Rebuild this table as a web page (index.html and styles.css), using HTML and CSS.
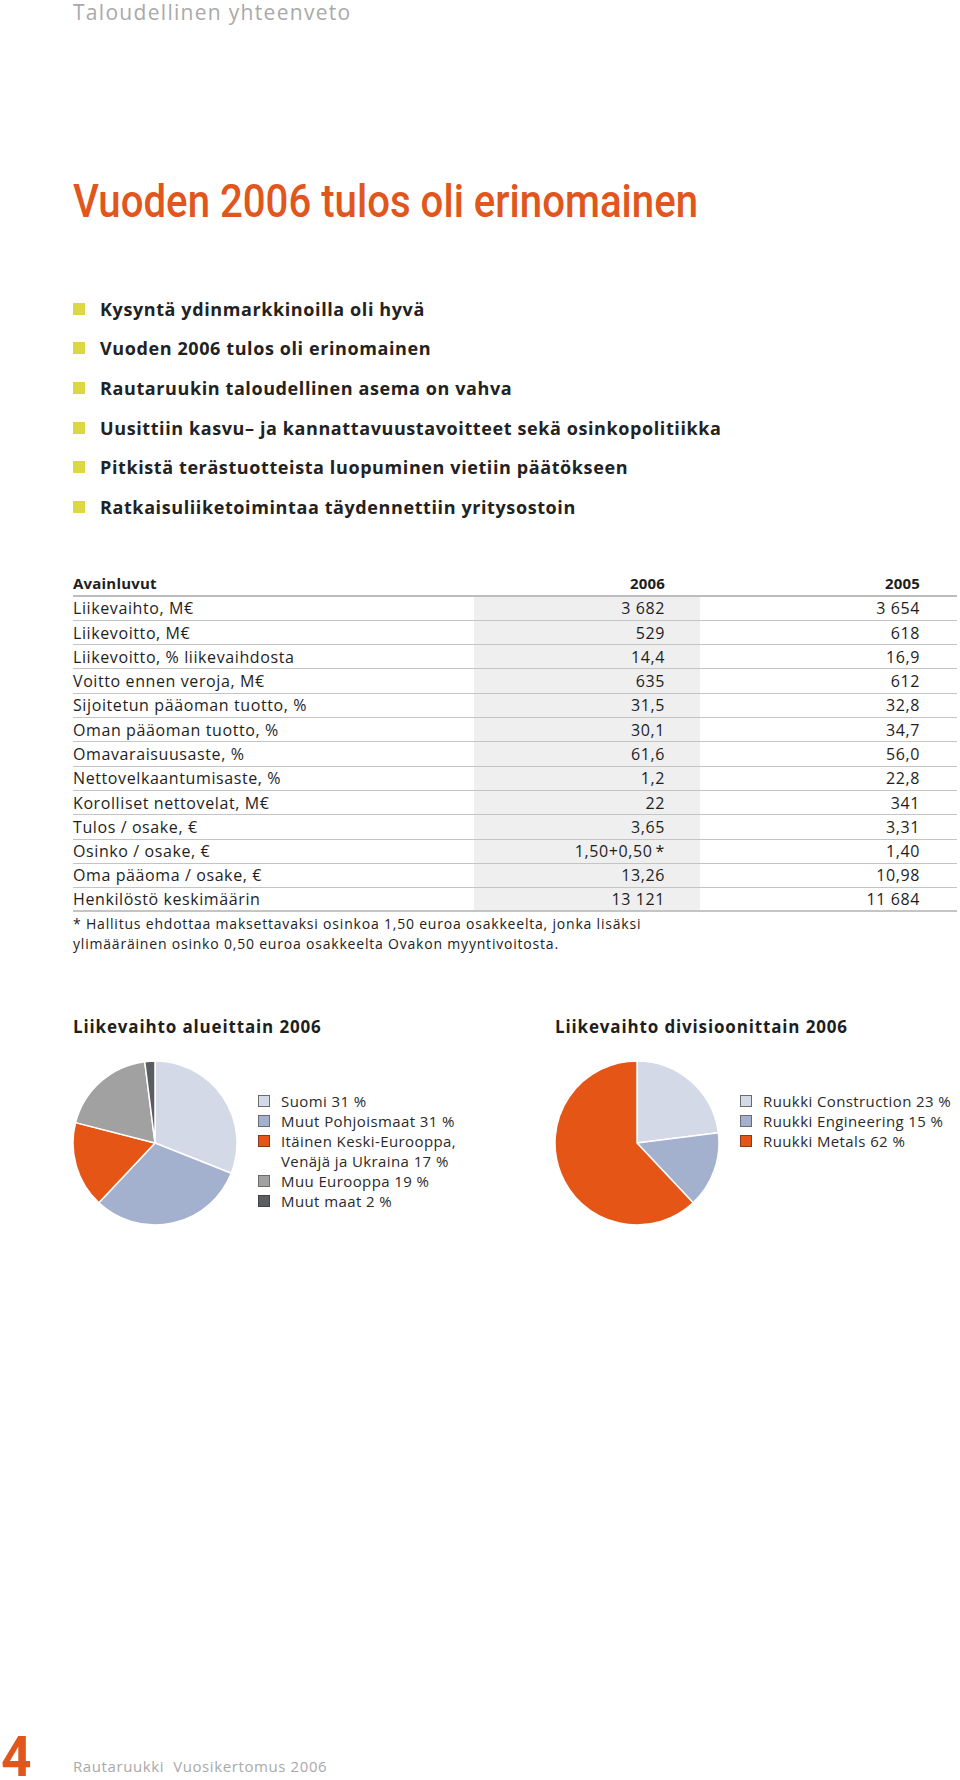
FILE: index.html
```html
<!DOCTYPE html>
<html lang="fi">
<head>
<meta charset="utf-8">
<title>Taloudellinen yhteenveto</title>
<link rel="stylesheet" href="styles.css">
</head>
<body>
<div class="page">
  <header class="running">Taloudellinen yhteenveto</header>

  <h1 class="headline"><span class="headline-text">Vuoden 2006 tulos oli erinomainen</span></h1>

  <ul class="highlights">
    <li>Kysyntä ydinmarkkinoilla oli hyvä</li>
    <li>Vuoden 2006 tulos oli erinomainen</li>
    <li>Rautaruukin taloudellinen asema on vahva</li>
    <li>Uusittiin kasvu– ja kannattavuustavoitteet sekä osinkopolitiikka</li>
    <li>Pitkistä terästuotteista luopuminen vietiin päätökseen</li>
    <li>Ratkaisuliiketoimintaa täydennettiin yritysostoin</li>
  </ul>

  <div class="keyfigs">
    <div class="kf-row kf-head">
      <span class="kf-label">Avainluvut</span>
      <span class="kf-cur">2006</span>
      <span class="kf-prev">2005</span>
    </div>
    <div class="kf-row"><span class="kf-label">Liikevaihto, M€</span><span class="kf-cur">3 682</span><span class="kf-prev">3 654</span></div>
    <div class="kf-row"><span class="kf-label">Liikevoitto, M€</span><span class="kf-cur">529</span><span class="kf-prev">618</span></div>
    <div class="kf-row"><span class="kf-label">Liikevoitto, % liikevaihdosta</span><span class="kf-cur">14,4</span><span class="kf-prev">16,9</span></div>
    <div class="kf-row"><span class="kf-label">Voitto ennen veroja, M€</span><span class="kf-cur">635</span><span class="kf-prev">612</span></div>
    <div class="kf-row"><span class="kf-label">Sijoitetun pääoman tuotto, %</span><span class="kf-cur">31,5</span><span class="kf-prev">32,8</span></div>
    <div class="kf-row"><span class="kf-label">Oman pääoman tuotto, %</span><span class="kf-cur">30,1</span><span class="kf-prev">34,7</span></div>
    <div class="kf-row"><span class="kf-label">Omavaraisuusaste, %</span><span class="kf-cur">61,6</span><span class="kf-prev">56,0</span></div>
    <div class="kf-row"><span class="kf-label">Nettovelkaantumisaste, %</span><span class="kf-cur">1,2</span><span class="kf-prev">22,8</span></div>
    <div class="kf-row"><span class="kf-label">Korolliset nettovelat, M€</span><span class="kf-cur">22</span><span class="kf-prev">341</span></div>
    <div class="kf-row"><span class="kf-label">Tulos / osake, €</span><span class="kf-cur">3,65</span><span class="kf-prev">3,31</span></div>
    <div class="kf-row"><span class="kf-label">Osinko / osake, €</span><span class="kf-cur">1,50+0,50<span class="star">*</span></span><span class="kf-prev">1,40</span></div>
    <div class="kf-row"><span class="kf-label">Oma pääoma / osake, €</span><span class="kf-cur">13,26</span><span class="kf-prev">10,98</span></div>
    <div class="kf-row kf-last"><span class="kf-label">Henkilöstö keskimäärin</span><span class="kf-cur">13 121</span><span class="kf-prev">11 684</span></div>
  </div>

  <p class="note">* Hallitus ehdottaa maksettavaksi osinkoa 1,50 euroa osakkeelta, jonka lisäksi<br>ylimääräinen osinko 0,50 euroa osakkeelta Ovakon myyntivoitosta.</p>

  <section class="charts">
    <div class="chart">
      <h2 class="chart-title">Liikevaihto alueittain 2006</h2>
      <div class="chart-body">
        <svg class="pie" width="166" height="166" viewBox="0 0 166 166">
          <g stroke="#ffffff" stroke-width="1.5" stroke-linejoin="round">
            <path fill="#d4d9e8" d="M83 83 L83 1 A82 82 0 0 1 159.24 113.18 Z"/>
            <path fill="#a3b1cf" d="M83 83 L159.24 113.18 A82 82 0 0 1 26.87 142.78 Z"/>
            <path fill="#e55516" d="M83 83 L26.87 142.78 A82 82 0 0 1 3.57 62.61 Z"/>
            <path fill="#a1a1a1" d="M83 83 L3.57 62.61 A82 82 0 0 1 72.72 1.65 Z"/>
            <path fill="#5c5d60" d="M83 83 L72.72 1.65 A82 82 0 0 1 83 1 Z"/>
          </g>
        </svg>
        <ul class="legend">
          <li><span class="sw sw-light"></span><span>Suomi 31 %</span></li>
          <li><span class="sw sw-blue"></span><span>Muut Pohjoismaat 31 %</span></li>
          <li><span class="sw sw-orange"></span><span>Itäinen Keski-Eurooppa,<br>Venäjä ja Ukraina 17 %</span></li>
          <li><span class="sw sw-grey"></span><span>Muu Eurooppa 19 %</span></li>
          <li><span class="sw sw-dark"></span><span>Muut maat 2 %</span></li>
        </ul>
      </div>
    </div>
    <div class="chart">
      <h2 class="chart-title">Liikevaihto divisioonittain 2006</h2>
      <div class="chart-body">
        <svg class="pie" width="166" height="166" viewBox="0 0 166 166">
          <g stroke="#ffffff" stroke-width="1.5" stroke-linejoin="round">
            <path fill="#d4d9e8" d="M83 83 L83 1 A82 82 0 0 1 164.35 72.72 Z"/>
            <path fill="#a3b1cf" d="M83 83 L164.35 72.72 A82 82 0 0 1 139.13 142.78 Z"/>
            <path fill="#e55516" d="M83 83 L139.13 142.78 A82 82 0 1 1 83 1 Z"/>
          </g>
        </svg>
        <ul class="legend">
          <li><span class="sw sw-light"></span><span>Ruukki Construction 23 %</span></li>
          <li><span class="sw sw-blue"></span><span>Ruukki Engineering 15 %</span></li>
          <li><span class="sw sw-orange"></span><span>Ruukki Metals 62 %</span></li>
        </ul>
      </div>
    </div>
  </section>

  <footer class="pagefoot">
    <span class="pageno"><span class="pageno-text">4</span></span>
    <span class="pubname">Rautaruukki&nbsp; Vuosikertomus 2006</span>
  </footer>
</div>
</body>
</html>
```

FILE: styles.css
```css
html, body {
  margin: 0;
  padding: 0;
  background: #ffffff;
  overflow: hidden;
}

.page {
  width: 960px;
  height: 1780px;
  display: flex;
  flex-direction: column;
  font-family: "Open Sans", "DejaVu Sans", sans-serif;
  color: #1e1e1e;
}

.running {
  height: 25px;
  line-height: 25px;
  padding-left: 73px;
  font-family: "Open Sans", "Lato", sans-serif;
  font-size: 21px;
  letter-spacing: 1.3px;
  color: #a9a9a9;
}

.headline {
  margin: 153px 0 0 73px;
  font-family: "Roboto", "Liberation Sans", sans-serif;
  font-weight: 500;
  font-size: 46px;
  line-height: 46px;
  color: #e0561c;
  white-space: nowrap;
}

.headline-text {
  display: inline-block;
  transform: scaleX(0.873);
  transform-origin: left center;
}

.highlights {
  list-style: none;
  margin: 65px 0 0 73px;
  padding: 0;
}

.highlights li {
  display: flex;
  align-items: center;
  height: 39.6px;
  font-family: "Open Sans", "Lato", sans-serif;
  font-weight: 700;
  font-size: 18px;
  letter-spacing: 0.6px;
  color: #222222;
}

.highlights li::before {
  content: "";
  width: 12px;
  height: 12px;
  margin-right: 15px;
  background: #dcd843;
  flex: none;
}

.keyfigs {
  margin: 44px 3px 0 73px;
  font-size: 16px;
  letter-spacing: 0.6px;
}

.kf-row {
  display: grid;
  grid-template-columns: 401px 226px 1fr;
  height: 24.3px;
  box-sizing: border-box;
  border-bottom: 1px solid #c4c4c4;
  align-items: stretch;
}

.kf-row > span {
  display: flex;
  align-items: center;
}

.kf-cur,
.kf-prev {
  justify-content: flex-end;
  font-variant-numeric: tabular-nums;
}

.kf-cur {
  padding-right: 35px;
  background: #efefef;
}

.kf-prev {
  padding-right: 37px;
}

.kf-head {
  height: 26px;
  border-bottom: 2px solid #bdbdbd;
  font-weight: 700;
  font-size: 15px;
  letter-spacing: 0.2px;
}

.kf-head .kf-cur {
  background: transparent;
}

.kf-last {
  border-bottom: 2px solid #c4c4c4;
}

.star {
  margin-left: 3px;
}

.note {
  margin: 2px 0 0 73px;
  font-size: 14px;
  line-height: 19.5px;
  letter-spacing: 0.8px;
  color: #222222;
}

.charts {
  display: grid;
  grid-template-columns: 482px 1fr;
  padding-left: 73px;
  margin-top: 62px;
}

.chart-title {
  margin: 0;
  height: 24px;
  line-height: 24px;
  font-family: "Open Sans", "Lato", sans-serif;
  font-weight: 700;
  font-size: 17px;
  letter-spacing: 0.85px;
  color: #1e1e1e;
}

.chart-body {
  display: flex;
  align-items: flex-start;
  margin-top: 21px;
}

.pie {
  display: block;
  flex: none;
  margin-left: -1px;
}

.legend {
  list-style: none;
  margin: 31px 0 0 20px;
  padding: 0;
  font-family: "Open Sans", "Lato", sans-serif;
  font-size: 15px;
  line-height: 20px;
  letter-spacing: 0.4px;
  color: #2a2a2a;
}

.legend li {
  display: flex;
  align-items: flex-start;
}

.sw {
  flex: none;
  width: 10px;
  height: 10px;
  margin: 4px 11px 0 0;
  border: 1px solid #6b6b6b;
}

.sw-light { background: #d4d9e8; }
.sw-blue { background: #a3b1cf; }
.sw-orange { background: #e55516; border-color: #8a3a16; }
.sw-grey { background: #a1a1a1; }
.sw-dark { background: #5c5d60; border-color: #444444; }

.pagefoot {
  margin-top: auto;
  display: flex;
  align-items: flex-end;
  height: 46px;
  margin-bottom: 0.4px;
}

.pageno {
  width: 73px;
  font-family: "Roboto", "Liberation Sans", sans-serif;
  font-weight: 700;
  font-size: 56px;
  line-height: 46px;
  color: #e0561c;
}

.pageno-text {
  display: inline-block;
  transform: scaleX(0.95);
  transform-origin: left center;
  margin-left: 1px;
}

.pubname {
  font-family: "Open Sans", "Lato", sans-serif;
  font-size: 15px;
  line-height: 18px;
  margin-bottom: 4.4px;
  color: #a9a9a9;
  letter-spacing: 0.6px;
}
```
